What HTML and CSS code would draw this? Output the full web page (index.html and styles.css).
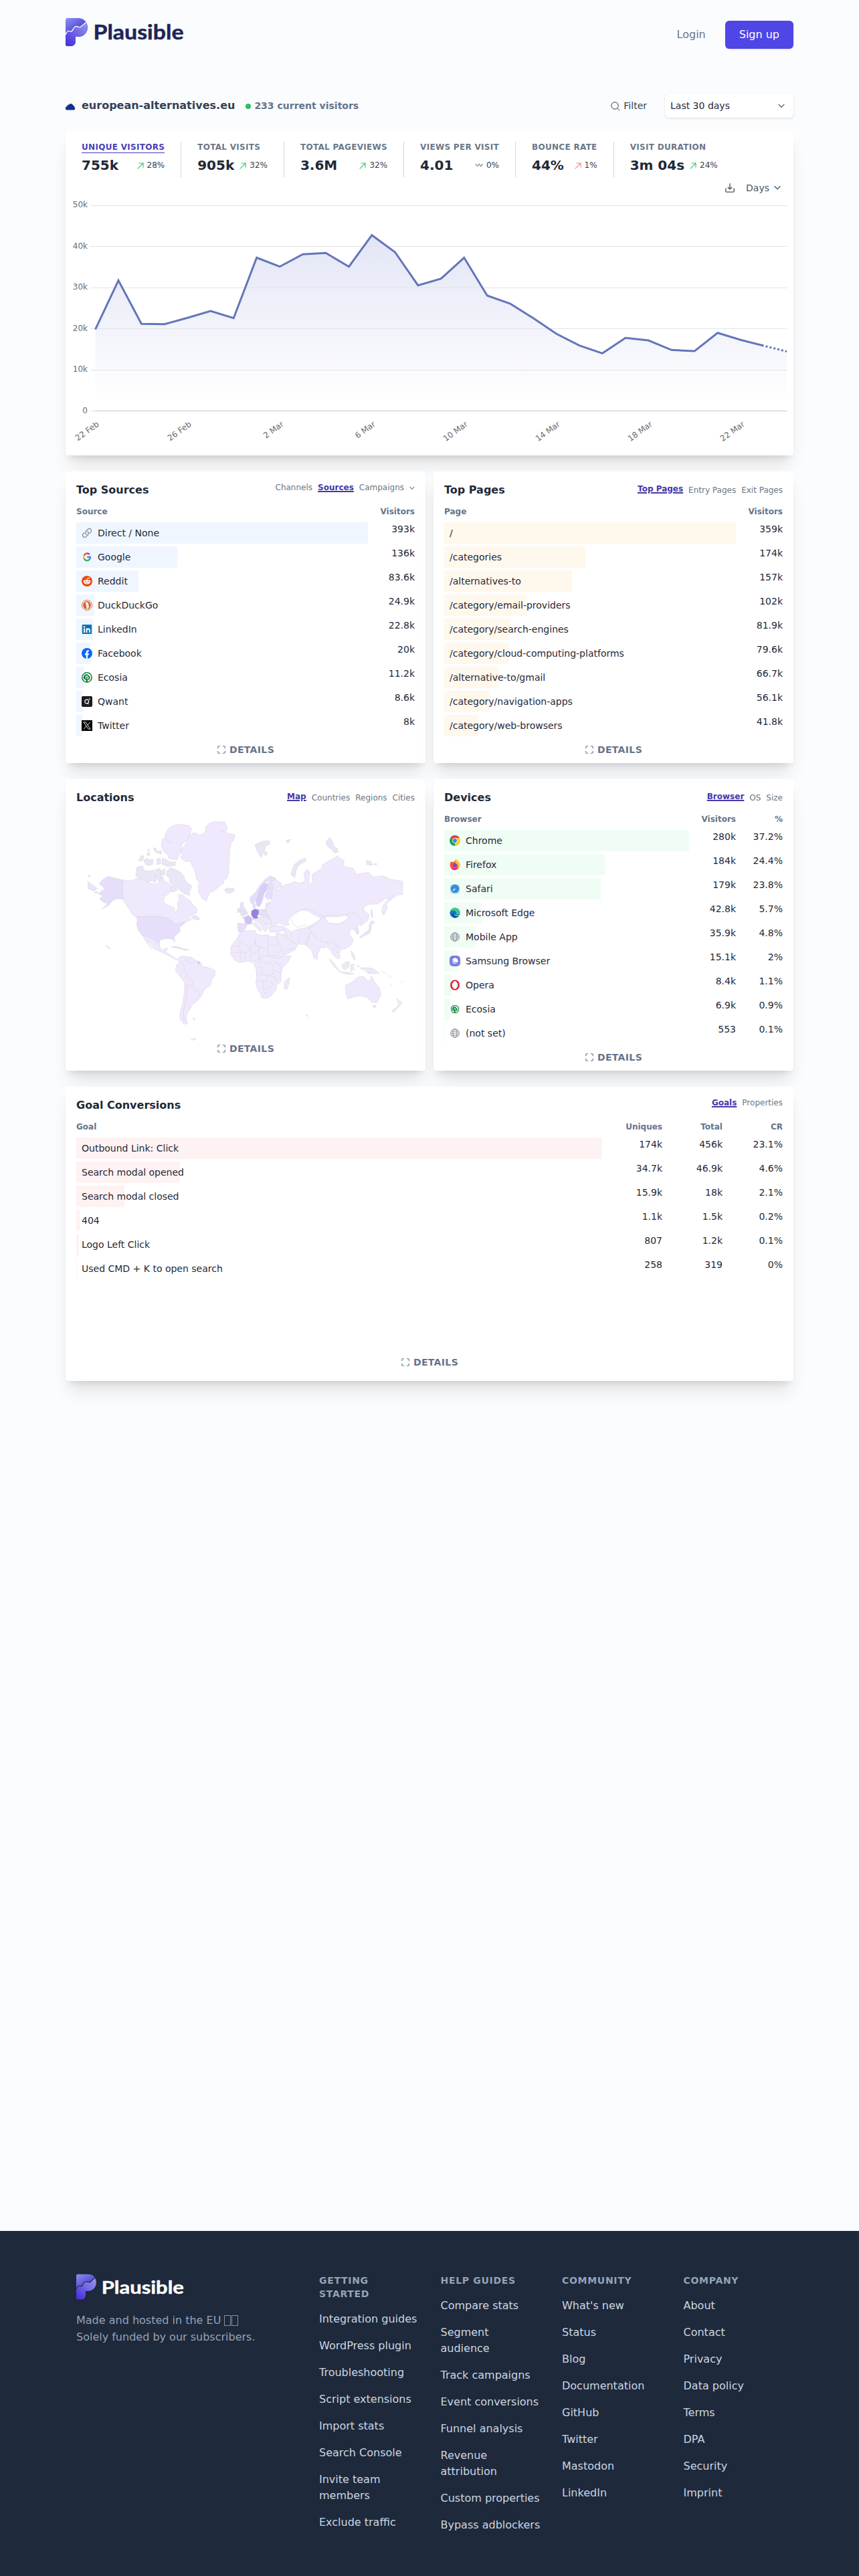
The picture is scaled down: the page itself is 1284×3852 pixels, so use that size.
FILE: index.html
```html
<!DOCTYPE html>
<html lang="en">
<head>
<meta charset="utf-8">
<title>Plausible · european-alternatives.eu</title>
<link rel="stylesheet" href="styles.css">
</head>
<body>
<svg class="defs" width="0" height="0" aria-hidden="true">
  <defs>
    <linearGradient id="pg" x1="0" y1="0" x2=".5" y2="1"><stop offset="0" stop-color="#8b93f3"/><stop offset=".5" stop-color="#5a4fd8"/><stop offset="1" stop-color="#4f36dc"/></linearGradient>
    <linearGradient id="pg2" x1="1" y1="0" x2=".2" y2="1"><stop offset="0" stop-color="#9a9af0"/><stop offset="1" stop-color="#4a33db"/></linearGradient>
  </defs>
  <symbol id="mark" viewBox="0 0 33 42">
    <path d="M3 0h16c8 0 14 6 14 14s-6 14-14 14h-4v7c0 4-3 7-7 7H3c-2 0-3-1-3-3V3c0-2 1-3 3-3z" fill="url(#pg)"/>
    <path d="M0 25c2-5 4-6 5.500-5.500S8.500 21 10 19s3-7 6-6.500 5 2.500 7.500 0S28 9 30.500 6.500C36 17 30 28 19 28h-4v7c0 4-3 7-7 7H3c-2 0-3-1-3-3z" fill="url(#pg2)"/>
    <path class="mark-line" d="M0 25c2-5 4-6 5.500-5.500S8.500 21 10 19s3-7 6-6.500 5 2.500 7.500 0S28 9 30.500 6.500" fill="none" stroke="currentColor" stroke-width="1.300"/>
  </symbol>
  <symbol id="expand" viewBox="0 0 24 24"><path d="M8 3H5a2 2 0 0 0-2 2v3m18 0V5a2 2 0 0 0-2-2h-3m0 18h3a2 2 0 0 0 2-2v-3M3 16v3a2 2 0 0 0 2 2h3" fill="none" stroke="currentColor" stroke-width="2" stroke-linecap="round" stroke-linejoin="round"/></symbol>
  <symbol id="up" viewBox="0 0 10 10"><path d="M.7 9.300 9 1M2.500 1H9v6.500" fill="none" stroke="currentColor" stroke-width="1.200"/></symbol>
  <symbol id="chev" viewBox="0 0 10 6"><path d="M1 .8l4 4 4-4" fill="none" stroke="currentColor" stroke-width="1.300" stroke-linecap="round" stroke-linejoin="round"/></symbol>
  <symbol id="globe" viewBox="0 0 16 16"><g fill="none" stroke="#6b7280" stroke-width=".8"><circle cx="8" cy="8" r="6.300"/><ellipse cx="8" cy="8" rx="3" ry="6.300"/><path d="M2.500 5h11M2.500 11h11M1.700 8h12.600"/></g></symbol>
  <symbol id="ecosia" viewBox="0 0 16 16"><circle cx="8" cy="8" r="7.200" fill="#fff" stroke="#15803d" stroke-width="1.500"/><path d="M3 10c-1-3 1-6 4-7l3 1 1 2 2 1-1 4-3 1v3H6.500v-3z" fill="#15803d"/><path d="M6 7c1-2 3-1 3 0s1 1 1 2-1 1-2 1M6.500 10V7.500" stroke="#fff" stroke-width="1.200" fill="none"/></symbol>
</svg>

<div class="wrap">
  <header class="top">
    <a class="logo"><svg class="logo-mark" viewBox="0 0 33 42"><use href="#mark"/></svg><svg class="logo-word" viewBox="0 0 136 42"><text x="-2.500" y="32" textLength="135" lengthAdjust="spacingAndGlyphs">Plausible</text></svg></a>
    <nav class="nav"><a class="login">Login</a><a class="signup">Sign up</a></nav>
  </header>

  <div class="site">
    <svg class="favicon" viewBox="0 0 16 16"><circle cx="10" cy="6" r="5" fill="none" stroke="#f3df8a" stroke-width="1" stroke-dasharray="1 1.500"/><path d="M2.500 14.500a2.600 2.600 0 0 1-.3-5.200 3 3 0 0 1 3-2.800 3.500 3.500 0 0 1 6.200 1.200 2 2 0 0 1 1.600 2.300 2.400 2.400 0 0 1-.8 4.500z" fill="#12308f"/></svg>
    <h1>european-alternatives.eu</h1>
    <span class="dot"></span><span class="current">233 current visitors</span>
    <span class="filter"><svg viewBox="0 0 14 14"><path d="M9.800 9.800 13.200 13.200M11.200 6a5.200 5.200 0 1 1-10.400 0 5.200 5.200 0 0 1 10.400 0z" fill="none" stroke="currentColor"/></svg>Filter</span>
    <span class="period">Last 30 days<svg viewBox="0 0 10 6"><use href="#chev"/></svg></span>
  </div>

  <section class="card main-graph">
    <div class="stats">
      <div class="stat active"><div class="label">Unique visitors</div><div class="val"><b>755k</b><span class="chg good"><svg><use href="#up"/></svg>28%</span></div></div>
      <div class="stat"><div class="label">Total visits</div><div class="val"><b>905k</b><span class="chg good"><svg><use href="#up"/></svg>32%</span></div></div>
      <div class="stat"><div class="label">Total pageviews</div><div class="val"><b>3.6M</b><span class="chg good"><svg><use href="#up"/></svg>32%</span></div></div>
      <div class="stat"><div class="label">Views per visit</div><div class="val"><b>4.01</b><span class="chg"><svg class="wave" viewBox="0 0 12 6"><path d="M.5 1.200C2 1.200 2.200 4.600 3.500 4.600S5 1.200 6.200 1.200 7.500 4.600 8.800 4.600 10 1.200 11.700 1.200" fill="none" stroke="currentColor" stroke-width=".9"/></svg>0%</span></div></div>
      <div class="stat"><div class="label">Bounce rate</div><div class="val"><b>44%</b><span class="chg bad"><svg><use href="#up"/></svg>1%</span></div></div>
      <div class="stat"><div class="label">Visit duration</div><div class="val"><b>3m 04s</b><span class="chg good"><svg><use href="#up"/></svg>24%</span></div></div>
    </div>
    <div class="tools">
      <svg class="dl" viewBox="0 0 14 14"><path d="M.8 7.500v4.200c0 .8.600 1.400 1.400 1.400h9.600c.8 0 1.400-.6 1.400-1.400V7.500M7 .3v8.200M3.800 5.800 7 9l3.200-3.200" fill="none" stroke="currentColor" stroke-width="1.400"/></svg>
      <span>Days</span><svg class="chev" viewBox="0 0 10 6"><use href="#chev"/></svg>
    </div>
    <svg class="chart" viewBox="98 291 1088 390">
      <defs><linearGradient id="area" gradientUnits="userSpaceOnUse" x1="0" y1="307" x2="0" y2="600"><stop offset="0" stop-color="#6574cd" stop-opacity=".22"/><stop offset="1" stop-color="#6574cd" stop-opacity="0"/></linearGradient></defs>
      <path class="area" d="M142.500 492.700 177 419.300 211.400 484.300 245.900 484.700 280.300 475.300 314.800 465 349.200 475.700 383.700 385.300 418.100 398.700 452.600 380.300 487 378.300 521.500 398.700 555.900 351.700 590.400 377 624.800 426.700 659.300 416.700 693.700 385.300 728.200 442 762.600 454 797.100 475.700 831.500 499 866 516.700 900.400 528.300 934.900 505.300 969.300 509 1003.800 523.300 1038.200 525 1072.700 497.700 1107.100 508.300 1141.600 517 1176 525V614.500H142.500z"/>
      <path class="grid" d="M135 307.500H1176.500M135 368.500H1176.500M135 430.500H1176.500M135 491.500H1176.500M135 553.500H1176.500M135 614.500H142"/>
      <path class="axis" d="M142 614.500H1176.500"/>
      <path class="line" d="M142.500 492.700 177 419.300 211.400 484.300 245.900 484.700 280.300 475.300 314.800 465 349.200 475.700 383.700 385.300 418.100 398.700 452.600 380.300 487 378.300 521.500 398.700 555.900 351.700 590.400 377 624.800 426.700 659.300 416.700 693.700 385.300 728.200 442 762.600 454 797.100 475.700 831.500 499 866 516.700 900.400 528.300 934.900 505.300 969.300 509 1003.800 523.300 1038.200 525 1072.700 497.700 1107.100 508.300 1141.600 517"/>
      <path class="line dotted" d="M1141.600 517 1176 525.500"/>
      <g class="ylab"><text x="131" y="310">50k</text><text x="131" y="372">40k</text><text x="131" y="433">30k</text><text x="131" y="495">20k</text><text x="131" y="556">10k</text><text x="131" y="618">0</text></g>
      <g class="xlab"><text transform="translate(149 636) rotate(-36)">22 Feb</text><text transform="translate(287 636) rotate(-36)">26 Feb</text><text transform="translate(425 636) rotate(-36)">2 Mar</text><text transform="translate(562 636) rotate(-36)">6 Mar</text><text transform="translate(700 636) rotate(-36)">10 Mar</text><text transform="translate(838 636) rotate(-36)">14 Mar</text><text transform="translate(976 636) rotate(-36)">18 Mar</text><text transform="translate(1114 636) rotate(-36)">22 Mar</text></g>
    </svg>
  </section>

  <div class="panels">
    <section class="card panel blue">
      <div class="head"><h2>Top Sources</h2><div class="tabs"><span>Channels</span><span class="on">Sources</span><span>Campaigns</span><svg class="tchev" viewBox="0 0 10 6"><use href="#chev"/></svg></div></div>
      <div class="cols"><span>Source</span><span>Visitors</span></div>
      <div class="rows">
        <div class="row"><div class="bar"><i style="width:100%"></i><span><svg viewBox="0 0 24 24"><path d="M13.200 8.700a4.500 4.500 0 0 1 1.200 7.200l-4.500 4.500a4.500 4.500 0 0 1-6.400-6.400L5.300 12.200m13.400-.4 1.800-1.800a4.500 4.500 0 0 0-6.400-6.400l-4.500 4.500a4.500 4.500 0 0 0 1.200 7.200" fill="none" stroke="#8b95a1" stroke-width="2.200" stroke-linecap="round"/></svg>Direct / None</span></div><b>393k</b></div>
        <div class="row"><div class="bar"><i style="width:34.6%"></i><span><svg viewBox="0 0 16 16"><g fill="none" stroke-width="2.300"><path d="M12 4.200A5 5 0 0 0 3.600 5.700" stroke="#e94235"/><path d="M3.600 5.700a5 5 0 0 0 0 4.600" stroke="#fabb05"/><path d="M3.600 10.300a5 5 0 0 0 7.800 1.600" stroke="#34a853"/><path d="M11.400 11.900A5 5 0 0 0 13 8H8.200" stroke="#4285f4"/></g></svg>Google</span></div><b>136k</b></div>
        <div class="row"><div class="bar"><i style="width:21.3%"></i><span><svg viewBox="0 0 16 16"><circle cx="8" cy="8" r="8" fill="#ee4a12"/><ellipse cx="8" cy="9.300" rx="4.600" ry="3.200" fill="#fff"/><circle cx="3.500" cy="8" r="1.100" fill="#fff"/><circle cx="12.500" cy="8" r="1.100" fill="#fff"/><circle cx="11" cy="3.600" r="1" fill="#fff"/><path d="M8 6l.7-2.800 2.300.5" stroke="#fff" stroke-width=".7" fill="none"/><circle cx="6.200" cy="8.700" r=".9" fill="#ee4a12"/><circle cx="9.800" cy="8.700" r=".9" fill="#ee4a12"/><path d="M6.300 10.700q1.700 1 3.400 0" stroke="#ee4a12" stroke-width=".6" fill="none"/></svg>Reddit</span></div><b>83.6k</b></div>
        <div class="row"><div class="bar"><i style="width:6.3%"></i><span><svg viewBox="0 0 16 16"><circle cx="8" cy="8" r="7.500" fill="#fff" stroke="#dd6b3f" stroke-width="1"/><circle cx="8" cy="8" r="5.900" fill="#dd5833"/><path d="M5.700 4c2-1.300 4.800.2 4.800 3 0 2 1 4 .5 6.200l-3 .8z" fill="#fff"/><path d="M8.300 7.800l3 .2-1.500 1.200-1.500-.4z" fill="#f2b01e"/><path d="M9 11.500l2 0v2l-1.800 .2z" fill="#5ca34a"/></svg>DuckDuckGo</span></div><b>24.9k</b></div>
        <div class="row"><div class="bar"><i style="width:5.8%"></i><span><svg viewBox="0 0 16 16"><rect x=".7" y="1" width="14.500" height="14" rx="1" fill="#0a73b1"/><circle cx="4" cy="4.300" r="1.200" fill="#fff"/><path d="M4 6.500V13M7.500 6.500V13M7.500 9.500c0-2.700 4.500-2.700 4.500.3V13" stroke="#fff" stroke-width="1.900" fill="none"/></svg>LinkedIn</span></div><b>22.8k</b></div>
        <div class="row"><div class="bar"><i style="width:5.1%"></i><span><svg viewBox="0 0 16 16"><circle cx="8" cy="8" r="8" fill="#0866ff"/><path d="M6.700 16v-5.400H4.900V8h1.800V6.800c0-2.700 1.300-3.700 4.300-3.400v2.100c-1.600-.1-2 .1-2 1.200V8h2.100l-.5 2.600H9V16z" fill="#fff"/></svg>Facebook</span></div><b>20k</b></div>
        <div class="row"><div class="bar"><i style="width:2.8%"></i><span><svg viewBox="0 0 16 16"><use href="#ecosia"/></svg>Ecosia</span></div><b>11.2k</b></div>
        <div class="row"><div class="bar"><i style="width:2.2%"></i><span><svg viewBox="0 0 16 16"><rect width="16" height="16" rx="2" fill="#1c1c1e"/><circle cx="7.700" cy="8" r="2.900" fill="none" stroke="#fff" stroke-width="1.200"/><path d="M8 10.500l2.700 1.500M11.800 3.300v2M10.800 4.300h2" stroke="#fff" stroke-width=".9"/></svg>Qwant</span></div><b>8.6k</b></div>
        <div class="row"><div class="bar"><i style="width:2%"></i><span><svg viewBox="0 0 16 16"><rect width="16" height="16" fill="#000"/><path d="M2.800 2.800h3L13.200 13.200h-3zM13 2.800 8.800 7.500M7.200 8.900 3 13.200" fill="none" stroke="#fff" stroke-width=".9"/></svg>Twitter</span></div><b>8k</b></div>
      </div>
      <div class="details"><svg><use href="#expand"/></svg>DETAILS</div>
    </section>

    <section class="card panel orange">
      <div class="head"><h2>Top Pages</h2><div class="tabs low"><span class="on">Top Pages</span><span>Entry Pages</span><span>Exit Pages</span></div></div>
      <div class="cols"><span>Page</span><span>Visitors</span></div>
      <div class="rows">
        <div class="row"><div class="bar"><i style="width:100%"></i><span>/</span></div><b>359k</b></div>
        <div class="row"><div class="bar"><i style="width:48.5%"></i><span>/categories</span></div><b>174k</b></div>
        <div class="row"><div class="bar"><i style="width:43.7%"></i><span>/alternatives-to</span></div><b>157k</b></div>
        <div class="row"><div class="bar"><i style="width:28.4%"></i><span>/category/email-providers</span></div><b>102k</b></div>
        <div class="row"><div class="bar"><i style="width:22.8%"></i><span>/category/search-engines</span></div><b>81.9k</b></div>
        <div class="row"><div class="bar"><i style="width:22.2%"></i><span>/category/cloud-computing-platforms</span></div><b>79.6k</b></div>
        <div class="row"><div class="bar"><i style="width:18.6%"></i><span>/alternative-to/gmail</span></div><b>66.7k</b></div>
        <div class="row"><div class="bar"><i style="width:15.6%"></i><span>/category/navigation-apps</span></div><b>56.1k</b></div>
        <div class="row"><div class="bar"><i style="width:11.6%"></i><span>/category/web-browsers</span></div><b>41.8k</b></div>
      </div>
      <div class="details"><svg><use href="#expand"/></svg>DETAILS</div>
    </section>

    <section class="card panel locations">
      <div class="head"><h2>Locations</h2><div class="tabs low"><span class="on">Map</span><span>Countries</span><span>Regions</span><span>Cities</span></div></div>
      <svg class="map" viewBox="140 230 1300 990" preserveAspectRatio="none">
        <!-- arctic islands and Greenland -->
        <path class="l2" d="M622 287l4-30 14-14 25-10 20 4 18-2 8 16 3 14-4 10-20 2 18 4 12 10 16-3 11 10-8 22-12 14 2 14-7 12 3 22-5 18 4 20-6 22 2 20-8 28-10 4-4 18-18 14-14 14-22 12-10 18-4 20-18-8-14-26-4-34 7-8-14-26-4-24-6-20-8-14-6-16-26-2-16-18 12-12-14-8 12-20 8-12 12-28 8-18 20-12 20 12z"/>
        <path class="l2" d="M460 290l12-22 20-16 26-5 36 5 14 14-6 22-16 30-20 22-2 26-8 18-8 22-34-6-4-16-16-14-10-24 2-32 14-10 6 20 22 6-20-10-8-22z"/>
        <path class="l1" d="M350 410l12-24 10 6-8 18zM370 408l16-8 6 6 16-2v22l-18 6-10-4zM424 402l14-2 4 22-16 6zM447 400l14 4 16 12 24 0-2 16-30 4-22-10zM410 352l10 3 10 20-12-4zM428 372l12-10 5 20-12-4zM385 378l8-6 2 14-9 2zM386 362l7-2 1 8zM342 440l24-6 4 18 18 6 24-6 6 24 4 30-22-6-14 14-20-8-12-12-16-18zM418 450l20-4 2 24 12 20-10 22-22-26zM442 455l16-8-2 28-14-2zM465 458l15-16 22 8 20 12 14 18 4 16 16 20 12 6-6 22-8-4 6 26-18-6-20-14-14-16-20-12-10-10-2-20-12-12zM478 522l18 4 14 14-14 10-16-2zM566 662l14-8 20 14-2 8-24-4z"/>
        <!-- North America -->
        <path class="l4" d="M285 497l-34-9-26-8-22 14-16 20 14 10 10 16-14 4-14 16 20 6-14 14 14 16 20 6-24 26 30-20 14-20 20-8 22 2z"/>
        <path class="l1" d="M140 504l20 14 20 18-14 10-26-12zM168 552l12-4 4 4-10 6zM140 476l10 0-4 8z"/>
        <path class="l2" d="M285 497l30 3 30-10 30 10 20 12 30 3 14-14 8-20 10 22 20 12 8 24-8 14-22 20-4 22 20 15 24 10 6 26 10-20-2-26 8-14-4-22 18-2 14 18 16 8 14 24 16 14-4 18-28 14-4 10 12 6-22 10-20 8-14 12-12-10-28-22-30-8H340l-14-10-10-20-16-24-15-24z"/>
        <path class="l4" d="M342 660h98l30 8 20 16 10 12 26-8 18-4-14 16-12 10 2 18-20 18-5 12 5 18-10-12-20-6-30 6-6 16-14-4-16-16-20-8-20-7-14-20-8-24 2-22z"/>
        <path class="l2" d="M365 745l20 7 20 8 15 15 15 5 2 22 13 8 14-10 6 4-10 14 20 14 16 14 14 8-10-2-20-12-26-14-22-12-20-10-16-24-14-18 12 28 10 16-16-20z"/>
        <path class="l1" d="M486 796l22-2 22 10 4 4-22-4-26-6zM534 806l18 2 4 4-20 0zM214 792l8 4 8 4 4 6-8-4z"/>
        <!-- South America -->
        <path class="l2" d="M510 850l15-12 20 2 25 5 14 12 22 10 6 18 28 6 24 12 0 20-14 22-5 26-24 14-10 26-14 20-12 14-16 12-8 18-12 20-4 24 6 22-14 2-16-20-2-22 12-52 7-48 1-46-22-30-16-22 4-24 12-14z"/>
        <path class="l6" d="M594 860l8 6-4 10-6-6z"/>
        <path class="l1" d="M572 1118l10 0-4 6zM564 1214l22-8-6 8zM1038 1104h6v6z"/>
        <path class="b" d="M545 842l2 20 20 8 18-8M520 868l16 10 2 22-16 20M538 900l12 10-8 20 26 14 4 20-20 8-14-8M572 964l22 26 6 22-16 20M552 968l-8 60-10 60 2 40M568 970l8 20 16 6"/>
        <!-- Europe -->
        <path class="l1" d="M703 540l12-8 10 4 16-4 2 12-20 14-16-8zM828 338l30-14 28-4 4 14-18 10-6 24-14 28-10-20-8-16zM866 372l10-4 2 14-8 6zM955 320l20-6-12 18zM1135 305l-16 22 10 22 18 12 6 14 18-4-6-18-14-6-2-18zM1285 410l20 4 6 16-22-2zM1314 424l16 0-4 6zM1038 398l-30 12-20 20-12 42 16 14 4-28 10-26 30-20z"/>
        <path class="l3" d="M810 600l-2-26 22-22 18-32 22-26 20-15 22 9 6 14-33-2-20 10-15 20-10 30-8 30-12 14z"/>
        <path class="l5" d="M865 510l16 4-3 26-13 20-3 15-7 25-10 17-10-5-3-22 8-30 10-30z"/>
        <path class="l3" d="M880 508l18-6 7 58-5 20-20 5-12-15 12-25z"/>
        <path class="l3" d="M820 606l10-4-2 22-8-2zM768 600l12-4 0 18 12 20 8 10-14 12-14 2-4-22zM756 628l10-6 4 16-12 6z"/>
        <path class="l3" d="M758 690l38 5-6 16-10 17-18 2-6-20z"/>
        <path class="l1" d="M873 602l14-8 14 20 4 34-26 10-6-10zM855 658l45-4 26 14 8 16-30 12-18-16-24-4z"/>
        <path class="l2" d="M838 662l36 4 18 8 4 16-12 16-12 24-12-16-16-26-14-10-16-4zM818 692l14-6 14 18 10 16-8 6-18-22zM887 710l24-8 34 3 5 16-30 8-32 0z"/>
        <path class="l3" d="M842 630l28-2 4 24-18 6-14-8z"/>
        <path class="l6" d="M776 664l14-2 10-8 16 14-1 24-14 4-14-6-2-18z"/>
        <path class="l7" d="M814 636l14-9 14 4 0 20-5 6 2 11-16 1-9-14z"/>
        <path class="b" d="M845 672l20 6 8 14M855 690l18 4 12-4M900 654l-20 14"/>
        <!-- Russia and Asia -->
        <path class="l2" d="M905 490l16 10 16 12 4 14-20 4-4 16 14-12 20-16 20-4 20-10 22 8 22-12-6-32 12-18 12 10-2 26-2 34 16-14-2-34 22-16 16-10 4-16 24-18 24-12 14-12 14 14 14 6-6 24 22 8 20 4 14 28 30-8 22 0 18 20 40-6 32 16 48 8v58l-22 4-20 16-24 22 2 24-14 28-8-16 6-26 18-26 14-6-24 0-30 24-40 2-18 14 2 16 20 16-4 24-30 26-12-12-14-30-30-8-26 8-60 2-20 6-30-14-20-16-30-8-32 16-18 18-8 20 6 14-20 2-20-12-36 22 2-30-10-20-12-36 22-26z"/>
        <path class="l1" d="M1306 628l6 14-2 24-5-14zM1258 752l18-16 20-16 2-20 8-4 0 22-8 20-20 8-14 10zM1298 692l12-14 10 10-14 8zM1236 716l14-8 6 26-8 8z"/>
        <path class="l2" d="M1045 710l50-35 15-15 20 30 40 5 30-15 15-15-14-12 16-10 30 6 18 30 6 12-20 10-12 18-16-4-8 26 16 20-4 24-26 20-20 2-14-14-20-12-24 0-24-8-24-14-6-20-14-10z"/>
        <path class="b" d="M975 672l25-32 40-18 40 22 30 16-15 14-15 18-20 12-30-4-25 10-20-18zM1110 660l20-8 30 4 30-6 22 8-12 22-30 15-40-5z"/>
        <path class="l2" d="M950 708l20 16 8 6 22-12 40-8 20 16-6 14-14 46-40-2-26-14-16-16-14-34zM1055 732l15 4 8 24 22 12 28 4-12 26-16-4-14 28-2 28-14-6-8-36-16-14-12-12zM918 730l30 14 16 24 20 10 20 12-14 22-40 22-10-18-14-34-12-34zM1128 776l18-2 20 18 14 8-2 24-14-4 16 16-10 16-20-18-10-20-14-14z"/>
        <path class="b" d="M975 730l2 24M1005 716l20 24 20-6M1010 740l-2 40M940 740l20 10 22 20M1146 800l14 10 10-14M1040 712l22-2M945 828l20-20 30-6"/>
        <path class="l0" d="M1135 850l12 14 22 30 8 16-20-20-16-24zM1176 908l34 4 26 6-30 2zM1184 880l20-18 12 2-2 24-20 12zM1222 876l16 0-8 8 8 14-10 2-6 8zM1224 814l8 12 10 26-6 4-10-22z"/>
        <path class="l2" d="M1260 892l24-2 30 4 26 22-20 0-26 0-14-14zM1250 880l6 0-2 8z"/>
        <path class="b" d="M1300 892v22M1346 904l24 14M1374 924l12 10M1384 962l10 12M1424 960l14-12"/>
        <path class="l2" d="M1200 970l26-14 24-22 24-5 12 15 16 8 4-24 14 26 20 30 6 26-16 36-20 0-20-22-28-8-26 4-26 10-8-28zM1312 1060l14 0-6 12zM1412 1028l10 14 12 2-8 14-10 10 2-18zM1416 1064l-8 16-10 10-8-4 12-12z"/>
        <!-- Africa -->
        <path class="l2" d="M768 730l32-6 28-1 6 18 30 4 14-4 16 10 20-2 4 22 14 34 16 34 28-2-10 24-26 32-6 32 2 26-20 18-2 22-18 22-16 14-22 0-10-24-14-28-2-24 4-24-4-34-10-26-24-6-36 6-20-14-14-22 2-38 22-30zM970 932l-2 28-8 26-12 0 2-32z"/>
        <path class="b" d="M768 745l-14 20M764 768l40 30 28-18-6-24M832 760l-2 30 50 20M882 750v40h36M735 795h28l4-28M764 800l8 22 30-2 6-22M806 800l10 22 24-2 8-22M846 800l-2 40 10 20M880 792l2 40 36 6 12-20M735 822h34M770 824l-2 36M786 824l2 36M812 826l-2 34M826 862l30-22 30-4 20 12 34-4M846 870l8-20M858 866l30 0 14 14 2 40-30 6-14-6-28 4M836 890l22-4 0 30M904 868l22 4 12 20M904 900l24 10 8 20M838 950h36l6-20M862 950l2 40 24-12 16-14M880 926l30 6 8 24M890 950l14 14 12 12M862 1000l12 4 20-16"/>
      </svg>
      <div class="details"><svg><use href="#expand"/></svg>DETAILS</div>
    </section>

    <section class="card panel green">
      <div class="head"><h2>Devices</h2><div class="tabs low"><span class="on">Browser</span><span>OS</span><span>Size</span></div></div>
      <div class="cols"><span>Browser</span><span>Visitors</span><span>%</span></div>
      <div class="rows">
        <div class="row"><div class="bar"><i style="width:100%"></i><span><svg viewBox="0 0 16 16"><path d="M8 8 1.100 4A8 8 0 0 1 14.900 4z" fill="#dc4437"/><path d="M8 8 1.100 4A8 8 0 0 0 8 16l3.500-6z" fill="#1e9e57"/><path d="M8 8l0 8A8 8 0 0 0 14.900 4H8z" fill="#fccb2f"/><circle cx="8" cy="8" r="3.800" fill="#fff"/><circle cx="8" cy="8" r="3" fill="#3f7de8"/></svg>Chrome</span></div><b>280k</b><b>37.2%</b></div>
        <div class="row"><div class="bar"><i style="width:65.7%"></i><span><svg viewBox="0 0 16 16"><path d="M1 5.500 2 3l2 1.300C6 4 8 3 9.500 0c2.500 2 6 4.500 6 8.500a7.500 7.300 0 0 1-15 0c0-1 .2-2 .5-3z" fill="#f8563a"/><path d="M9.500 0c2.500 2 6 4.500 6 8.500 0 3-1.500 5-4 6.300 3-5 0-9-4-10.300 1-.8 2-2.500 2-4.500z" fill="#ffc83d"/><path d="M1.500 11c2 3 7 4 11 1-1 3-4 4-5.500 4-2.500 0-4.500-2-5.500-5z" fill="#e5257c"/><circle cx="7.800" cy="8.800" r="2.900" fill="#7a45d8"/></svg>Firefox</span></div><b>184k</b><b>24.4%</b></div>
        <div class="row"><div class="bar"><i style="width:63.9%"></i><span><svg viewBox="0 0 16 16"><rect x="1" y="1.500" width="14" height="14" rx="3" fill="#d3e0ea"/><circle cx="8" cy="8" r="6.500" fill="#2b93e4"/><path d="M12 3.800 8.800 8.800 7.200 7.200z" fill="#ef4a3a"/><path d="M4 12.200 7.200 7.200 8.800 8.800z" fill="#fff"/></svg>Safari</span></div><b>179k</b><b>23.8%</b></div>
        <div class="row"><div class="bar"><i style="width:15.3%"></i><span><svg viewBox="0 0 16 16"><circle cx="8" cy="8" r="7.600" fill="#1374c8"/><path d="M1 6C2.500 1.500 6 .4 8.500.4c4 0 7.100 3 7.100 6.600 0 2.500-2 3.600-4 3.600-1.500 0-2-.6-1.400-1.600C11 6 6.500 3 1 6z" fill="#3fc98a"/><path d="M6 8c-1 4 2.500 7 8 4.500-1.500 2-4 3.300-6.500 3C3.500 14 3 9.500 6 8z" fill="#0c4a8f"/><path d="M7.200 8.500c-.6 3 3.500 4.800 7.800 2.500-1.500 2-6 2.500-7.800-.5z" fill="#e8fff4"/></svg>Microsoft Edge</span></div><b>42.8k</b><b>5.7%</b></div>
        <div class="row"><div class="bar"><i style="width:12.8%"></i><span><svg viewBox="0 0 16 16"><use href="#globe"/></svg>Mobile App</span></div><b>35.9k</b><b>4.8%</b></div>
        <div class="row"><div class="bar"><i style="width:5.4%"></i><span><svg viewBox="0 0 16 16"><rect width="16" height="16" rx="5" fill="#7a80e8"/><circle cx="8.200" cy="7.800" r="4.300" fill="#fff"/><path d="M3 5.500C4.500 9 8.500 11.300 13 10.800" stroke="#7a80e8" stroke-width="1.200" fill="none"/></svg>Samsung Browser</span></div><b>15.1k</b><b>2%</b></div>
        <div class="row"><div class="bar"><i style="width:3%"></i><span><svg viewBox="0 0 16 16"><ellipse cx="8" cy="8" rx="5.700" ry="6.400" fill="#fff" stroke="#d8232f" stroke-width="2.600"/><ellipse cx="8" cy="8" rx="3.600" ry="6" fill="#fff"/></svg>Opera</span></div><b>8.4k</b><b>1.1%</b></div>
        <div class="row"><div class="bar"><i style="width:2.500%"></i><span><svg viewBox="-2 -2 20 20"><use href="#ecosia" width="16" height="16"/></svg>Ecosia</span></div><b>6.9k</b><b>0.9%</b></div>
        <div class="row"><div class="bar"><i style="width:.2%"></i><span><svg viewBox="0 0 16 16"><use href="#globe"/></svg>(not set)</span></div><b>553</b><b>0.1%</b></div>
      </div>
      <div class="details"><svg><use href="#expand"/></svg>DETAILS</div>
    </section>

    <section class="card panel red goals">
      <div class="head"><h2>Goal Conversions</h2><div class="tabs"><span class="on">Goals</span><span>Properties</span></div></div>
      <div class="cols"><span>Goal</span><span>Uniques</span><span>Total</span><span>CR</span></div>
      <div class="rows">
        <div class="row"><div class="bar"><i style="width:100%"></i><span>Outbound Link: Click</span></div><b>174k</b><b>456k</b><b>23.1%</b></div>
        <div class="row"><div class="bar"><i style="width:19.7%"></i><span>Search modal opened</span></div><b>34.7k</b><b>46.9k</b><b>4.6%</b></div>
        <div class="row"><div class="bar"><i style="width:9.1%"></i><span>Search modal closed</span></div><b>15.9k</b><b>18k</b><b>2.1%</b></div>
        <div class="row"><div class="bar"><i style="width:.6%"></i><span>404</span></div><b>1.1k</b><b>1.5k</b><b>0.2%</b></div>
        <div class="row"><div class="bar"><i style="width:.5%"></i><span>Logo Left Click</span></div><b>807</b><b>1.2k</b><b>0.1%</b></div>
        <div class="row"><div class="bar"><i style="width:.15%"></i><span>Used CMD + K to open search</span></div><b>258</b><b>319</b><b>0%</b></div>
      </div>
      <div class="details"><svg><use href="#expand"/></svg>DETAILS</div>
    </section>
  </div>
</div>

<footer class="footer">
  <div class="fgrid">
    <div class="brand">
      <a class="logo small"><svg class="logo-mark" viewBox="0 0 33 42"><use href="#mark"/></svg><svg class="logo-word" viewBox="0 0 136 42"><text x="-2.500" y="32" textLength="135" lengthAdjust="spacingAndGlyphs">Plausible</text></svg></a>
      <p>Made and hosted in the EU <i class="glyph-box"></i><i class="glyph-box"></i><br>Solely funded by our subscribers.</p>
    </div>
    <div class="fcol"><h3>Getting started</h3><a>Integration guides</a><a>WordPress plugin</a><a>Troubleshooting</a><a>Script extensions</a><a>Import stats</a><a>Search Console</a><a>Invite team members</a><a>Exclude traffic</a></div>
    <div class="fcol"><h3>Help guides</h3><a>Compare stats</a><a>Segment audience</a><a>Track campaigns</a><a>Event conversions</a><a>Funnel analysis</a><a>Revenue attribution</a><a>Custom properties</a><a>Bypass adblockers</a></div>
    <div class="fcol"><h3>Community</h3><a>What's new</a><a>Status</a><a>Blog</a><a>Documentation</a><a>GitHub</a><a>Twitter</a><a>Mastodon</a><a>LinkedIn</a></div>
    <div class="fcol"><h3>Company</h3><a>About</a><a>Contact</a><a>Privacy</a><a>Data policy</a><a>Terms</a><a>DPA</a><a>Security</a><a>Imprint</a></div>
  </div>
</footer>
</body>
</html>
```
FILE: styles.css
```css
* { box-sizing: border-box; }
body {
  margin: 0;
  min-height: 3852px;
  display: flex;
  flex-direction: column;
  background: #fafcfe;
  color: #1f2937;
  font: 16px/24px "DejaVu Sans", sans-serif;
}
h1, h2, h3, p { margin: 0; }
.defs { position: absolute; }
.wrap { width: 1088px; margin: 0 auto; }

/* header */
.top { display: flex; justify-content: space-between; align-items: flex-start; padding-top: 27px; height: 73px; }
.logo { display: flex; gap: 11px; color: #fff; }
.logo-mark { width: 33px; height: 42px; }
.logo-word { width: 136px; height: 42px; overflow: visible; }
.logo-word text { font: 700 30px Lato, sans-serif; fill: #1e2558; stroke: #1e2558; stroke-width: .5; }
.nav { display: flex; align-items: center; gap: 29px; margin-top: 4px; color: #6b7785; }
.signup { padding: 9px 21px; border-radius: 6px; background: #4f46e5; color: #fff; box-shadow: 0 1px 2px rgba(0,0,0,.12); }

/* site bar */
.site { display: flex; align-items: center; height: 36px; margin: 67px 0 20px; font-size: 14px; }
.favicon { width: 16px; height: 16px; margin-right: 8px; }
.site h1 { font-size: 16px; color: #334155; }
.dot { width: 8px; height: 8px; border-radius: 50%; background: #2fbf60; margin: 2px 5px 0 16px; }
.current { font-weight: 700; color: #64748b; }
.filter { display: flex; align-items: center; gap: 5px; margin-left: auto; margin-right: 27px; color: #374151; }
.filter svg { width: 14px; height: 14px; margin-top: 1px; }
.period { display: flex; align-items: center; justify-content: space-between; width: 192px; height: 36px; padding: 0 13px 0 8px; border-radius: 5px; background: #fff; box-shadow: 0 1px 3px rgba(0,0,0,.14); }
.period svg { width: 10px; height: 7px; color: #5b6472; }

.card { background: #fff; border-radius: 4px; box-shadow: 0 20px 25px -5px rgba(0,0,0,.1), 0 8px 10px -6px rgba(0,0,0,.12); }

/* main graph */
.main-graph { height: 485px; padding-top: 16px; }
.stats { display: flex; height: 53px; }
.stat { padding: 0 24px; border-right: 1px solid #d1d5db; }
.stat:last-child { border: 0; }
.label { font-size: 12px; line-height: 16px; font-weight: 700; letter-spacing: .3px; text-transform: uppercase; color: #6b7787; white-space: nowrap; border-bottom: 1px solid transparent; }
.active .label { color: #4a3fb5; border-color: #4338ca; }
.val { display: flex; align-items: center; justify-content: space-between; margin-top: 4px; line-height: 28px; white-space: nowrap; }
.val b { font-size: 20px; margin-right: 8px; }
.chg { display: flex; align-items: center; font-size: 12px; color: #374151; }
.chg svg { width: 10px; height: 10px; margin: 2px 5px 0 0; }
.chg .wave { width: 12px; height: 6px; margin-top: -1px; }
.good svg { color: #3cc66d; }
.bad svg { color: #f08a8a; }
.tools { display: flex; align-items: center; justify-content: flex-end; height: 26px; padding: 6px 19px 0 0; font-size: 14px; line-height: 20px; color: #4b5563; }
.dl { width: 14px; height: 14px; margin-right: 17px; }
.tools .chev { width: 10px; height: 6px; margin-left: 7px; }
.chart { display: block; width: 1088px; height: 390px; }
.area { fill: url(#area); }
.grid { stroke: #e2e3e6; fill: none; }
.axis { stroke: #c6c7cb; }
.line { fill: none; stroke: #6575ba; stroke-width: 3; }
.dotted { stroke-dasharray: 3 3; stroke-dashoffset: -3; }
.chart text { font-size: 12px; fill: #6b6b6f; text-anchor: end; }

/* report panels */
.panels { display: grid; grid-template-columns: 538px 538px; column-gap: 12px; row-gap: 24px; padding: 24px 0; }
.panel { display: flex; flex-direction: column; height: 436px; padding: 16px 16px 10px; --col: 70px; }
.goals { grid-column: span 2; height: 440px; padding-bottom: 18px; --col: 90px; }
.locations { padding-bottom: 23px; }
.head { display: flex; justify-content: space-between; align-items: flex-start; height: 24px; }
.head h2 { font-size: 16px; }
.tabs { display: flex; gap: 8px; font-size: 12px; line-height: 16px; color: #6b7785; }
.tabs .on { font-weight: 700; color: #4338a8; text-decoration: underline 2px; }
.low span { padding-top: 4px; }
.low .on { padding-top: 2px; }
.tchev { width: 8px; height: 6px; margin-top: 6px; }
.cols { display: flex; margin: 12px 0 8px; font-size: 12px; line-height: 16px; font-weight: 700; color: #64748b; }
.cols span { width: var(--col); text-align: right; }
.cols span:first-child { flex: 1; text-align: left; }
.row { display: flex; height: 32px; margin-bottom: 4px; font-size: 14px; line-height: 20px; }
.row > b { width: var(--col); text-align: right; font-weight: 400; }
.bar { flex: 1; display: grid; }
.bar > * { grid-area: 1 / 1; }
.bar > i { background: var(--tint); }
.bar > span { display: flex; align-items: center; gap: 8px; padding-left: 8px; white-space: nowrap; }
.bar svg { width: 16px; height: 16px; }
.blue { --tint: #eff6ff; }
.orange { --tint: #fff8ed; }
.green { --tint: #f0fdf4; }
.red { --tint: #fef2f2; }
.details { display: flex; justify-content: center; align-items: center; gap: 5px; margin-top: auto; font-size: 14px; line-height: 20px; font-weight: 700; letter-spacing: .35px; color: #64748b; }
.details svg { width: 14px; height: 14px; }

/* map */
.map { width: 472.6px; height: 330px; margin: 21.700px 0 0 16.900px; overflow: hidden; flex: none; }
.map path { stroke: #dad8e2; stroke-width: .7; vector-effect: non-scaling-stroke; stroke-linejoin: round; }
.map .b { fill: none; }
.l0 { fill: #ececf0; }
.l1 { fill: #eae6f6; }
.l2 { fill: #f0e9fd; }
.l3 { fill: #e6dffa; }
.l4 { fill: #e6defb; }
.l5 { fill: #d9cef9; }
.l6 { fill: #cfc0f5; }
.map .l7 { fill: #9b80e0; stroke: #9b80e0; }

/* footer */
.footer { margin-top: auto; height: 516px; padding: 64px 114px 0; background: #1e293b; }
.fgrid { display: grid; grid-template-columns: 331px 149.500px 149.500px 149.500px 149.500px; column-gap: 32px; }
.brand p { color: #94a3b8; margin-top: 18px; line-height: 25px; }
.glyph-box { display: inline-block; width: 10px; height: 16px; margin-right: 1px; border: 1px solid #8290a6; vertical-align: -3px; }
.small { gap: 9.500px; color: #1e293b; }
.small .logo-mark { width: 30px; height: 39px; }
.small .logo-word { width: 124px; height: 39px; }
.small .logo-word text { fill: #fff; stroke: #fff; }
.fcol { display: flex; flex-direction: column; gap: 16px; color: #cbd5e1; }
.fcol h3 { font-size: 14px; line-height: 20px; letter-spacing: .7px; text-transform: uppercase; color: #94a3b8; }
```
